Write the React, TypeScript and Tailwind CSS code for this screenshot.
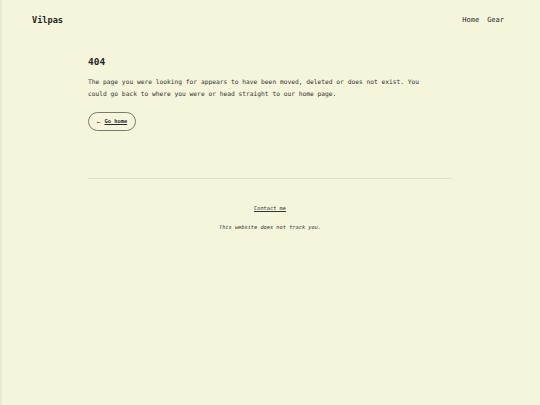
import React from "react";

const mono = { fontFamily: '"DejaVu Sans Mono", "Liberation Mono", monospace' };

export default function App() {
  return (
    <div
      className="min-h-[405px] w-full bg-[#f5f5dc] text-[#2f2f2f] border-l-2 border-[#e9e9cf]"
      style={mono}
    >
      {/* Header */}
      <header className="h-[40px] pl-[30px] pr-[36px] flex items-center justify-between">
        <a href="#" className="text-[8.6px] font-semibold leading-[12px] text-[#262626]">
          Vilpas
        </a>
        <nav className="flex items-center gap-[8px] text-[7px] leading-[12px] text-[#262626]">
          <a href="#">Home</a>
          <a href="#">Gear</a>
        </nav>
      </header>

      <main className="w-[364px] mx-auto -translate-x-[1px]">
        <h1 className="mt-[16px] text-[9.5px] font-semibold leading-[12px] text-[#262626]">404</h1>
        <p className="mt-[8px] max-w-[340px] text-[6.25px] leading-[12px] text-[#333]">
          The page you were looking for appears to have been moved, deleted or does not exist. You
          could go back to where you were or head straight to our home page.
        </p>
        <a
          href="#"
          className="mt-[12px] inline-flex items-center gap-[4px] h-[19px] w-[48px] justify-center rounded-full border border-[#7a7a70] text-[5.4px] font-bold text-[#2a2a2a]"
        >
          <span className="font-normal text-[6px]">←</span>
          <span className="underline">Go home</span>
        </a>

        <hr className="mt-[47px] border-0 border-t border-[#e2e2c8]" />

        <footer className="flex flex-col items-center">
          <a href="#" className="mt-[25px] text-[5.3px] leading-[8px] underline text-[#333]">
            Contact me
          </a>
          <p className="mt-[11px] text-[5.3px] leading-[8px] italic text-[#333]">
            This website does not track you.
          </p>
        </footer>
      </main>
    </div>
  );
}
